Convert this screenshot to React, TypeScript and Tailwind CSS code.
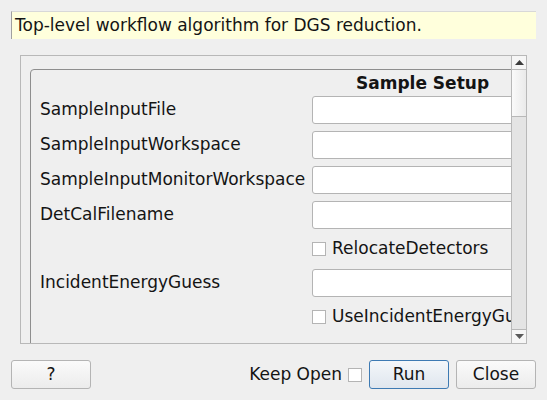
const font = { fontFamily: '"DejaVu Sans", sans-serif' };

function TextBox() {
  return (
    <div className="h-[28px] w-[250px] shrink-0 rounded-[3px] border border-[#b4b4b4] bg-white" />
  );
}

function Check({ label }: { label: string }) {
  return (
    <div className="flex h-[26px] items-center gap-[6px] whitespace-nowrap">
      <span className="h-[14px] w-[14px] shrink-0 border border-[#b4b4b4] bg-white" />
      <span>{label}</span>
    </div>
  );
}

function Row({ label, children }: { label?: string; children: React.ReactNode }) {
  return (
    <div className="flex items-center">
      <div className="w-[272px] shrink-0 whitespace-nowrap">{label}</div>
      {children}
    </div>
  );
}

export default function App() {
  return (
    <div
      className="h-[400px] w-[547px] overflow-hidden bg-[#efefef] text-[17px] text-[#141414]"
      style={font}
    >
      <div className="px-[11px] pt-[11px]">
        <div className="flex h-[28px] items-center border-l border-t border-l-[#a0a0a0] border-t-[#d8d8d8] bg-[#ffffdc] pl-[3px]">
          Top-level workflow algorithm for DGS reduction.
        </div>
      </div>

      <div className="ml-[20px] mt-[16px] flex h-[289px] w-[507px] border border-[#b8b8b8]">
        <div className="relative flex-1 overflow-hidden pl-[9px] pt-[13px]">
          <div className="h-[400px] w-[600px] rounded-[4px] border border-[#8e8e8e] pl-[9px]">
            <div className="pl-[316px] pt-[2px] text-[17px] font-bold leading-[22px]">Sample Setup</div>
            <div className="mt-[2px] flex flex-col gap-[7px]">
              <Row label="SampleInputFile"><TextBox /></Row>
              <Row label="SampleInputWorkspace"><TextBox /></Row>
              <Row label="SampleInputMonitorWorkspace"><TextBox /></Row>
              <Row label="DetCalFilename"><TextBox /></Row>
              <Row><Check label="RelocateDetectors" /></Row>
              <Row label="IncidentEnergyGuess"><TextBox /></Row>
              <Row><Check label="UseIncidentEnergyGuess" /></Row>
              <Row><div className="mt-[7px]"><TextBox /></div></Row>
            </div>
          </div>
        </div>
        <div className="flex w-[15px] shrink-0 flex-col border-l border-[#b8b8b8] bg-[#e4e4e4]">
          <div className="flex h-[14px] items-center justify-center border-b border-[#b8b8b8] bg-[#f6f6f6]">
            <svg width="9" height="5" viewBox="0 0 9 5"><path d="M4.5 0L9 5H0z" fill="#3c3c3c" /></svg>
          </div>
          <div className="h-[47px] border-b border-[#b8b8b8] bg-gradient-to-r from-[#fafafa] to-[#eaeaea]" />
          <div className="flex-1" />
          <div className="flex h-[14px] items-center justify-center border-t border-[#b8b8b8] bg-[#f6f6f6]">
            <svg width="9" height="5" viewBox="0 0 9 5"><path d="M0 0H9L4.5 5z" fill="#5a5a5a" /></svg>
          </div>
        </div>
      </div>

      <div className="mt-[16px] flex items-center px-[11px]">
        <button className="h-[29px] w-[80px] rounded-[3px] border border-[#b4b4b4] bg-gradient-to-b from-[#fafafa] to-[#ececec]">?</button>
        <div className="flex-1" />
        <span>Keep Open</span>
        <span className="ml-[6px] h-[14px] w-[14px] border border-[#b4b4b4] bg-white" />
        <button className="ml-[7px] h-[29px] w-[80px] rounded-[3px] border border-[#3d7ab3] bg-gradient-to-b from-[#f4f7fa] to-[#dfe6ee]">Run</button>
        <button className="ml-[7px] h-[29px] w-[80px] rounded-[3px] border border-[#b4b4b4] bg-gradient-to-b from-[#fafafa] to-[#ececec]">Close</button>
      </div>
    </div>
  );
}
